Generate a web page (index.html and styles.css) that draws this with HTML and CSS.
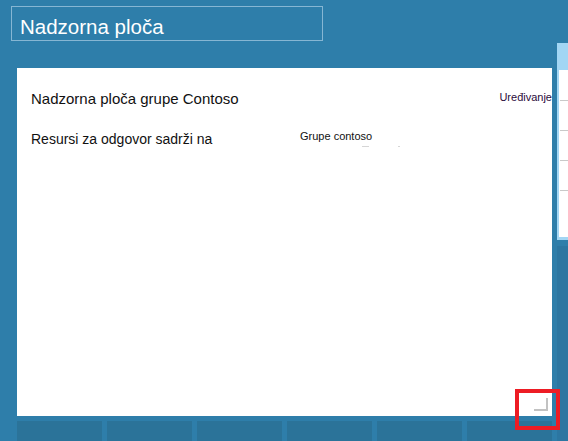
FILE: index.html
```html
<!DOCTYPE html>
<html lang="hr">
<head>
<meta charset="utf-8">
<title>Nadzorna ploča</title>
<link rel="stylesheet" href="styles.css">
</head>
<body>
<div class="page">
  <div class="left-col">
    <div class="page-title">Nadzorna ploča</div>
    <div class="panel">
      <div class="row row-head">
        <div class="big-text">Nadzorna ploča grupe Contoso</div>
        <div class="edit-link">Uređivanje</div>
      </div>
      <div class="row row-res">
        <div class="big-text res-label">Resursi za odgovor sadrži na</div>
        <div class="small-text">Grupe contoso</div>
      </div>
      <span class="speck speck-a"></span>
      <span class="speck speck-b"></span>
      <span class="resize-handle"></span>
    </div>
    <div class="tiles">
      <div class="tile"></div>
      <div class="tile"></div>
      <div class="tile"></div>
      <div class="tile"></div>
      <div class="tile"></div>
      <div class="tile"></div>
    </div>
  </div>
  <div class="right-col">
    <div class="side-panel">
      <div class="side-head"></div>
      <div class="side-body">
        <div class="side-line"></div>
        <div class="side-line"></div>
        <div class="side-line"></div>
        <div class="side-line"></div>
      </div>
    </div>
    <div class="side-tile"></div>
  </div>
  <div class="highlight"></div>
</div>
</body>
</html>
```

FILE: styles.css
```css
html, body {
  margin: 0;
  padding: 0;
}
body {
  background: #2e7eaa;
  font-family: "Liberation Sans", Arial, sans-serif;
  overflow: hidden;
}
.page {
  position: relative;
  width: 568px;
  height: 441px;
  display: flex;
  overflow: hidden;
}
.left-col {
  width: 557px;
  flex: none;
  display: flex;
  flex-direction: column;
}
.page-title {
  margin: 6px 0 0 11px;
  width: 302px;
  height: 25px;
  padding: 8px 0 0 8px;
  border: 1px solid #86b6d3;
  color: #ffffff;
  font-size: 20.5px;
  line-height: 23px;
  white-space: nowrap;
  overflow: hidden;
}
.panel {
  position: relative;
  margin: 27px 0 0 17px;
  width: 535px;
  height: 355px;
  background: #ffffff;
  overflow: hidden;
}
.row {
  display: flex;
  align-items: flex-start;
}
.row-head {
  margin-top: 22px;
  padding-left: 14px;
  justify-content: space-between;
}
.row-res {
  margin-top: 22px;
  padding-left: 14px;
}
.big-text {
  font-size: 15px;
  line-height: 18px;
  color: #111111;
  white-space: nowrap;
}
.res-label {
  width: 269px;
  flex: none;
  font-size: 14px;
}
.edit-link {
  margin-top: 1px;
  font-size: 11px;
  line-height: 13px;
  color: #2b0b3c;
  white-space: nowrap;
}
.small-text {
  font-size: 11px;
  line-height: 13px;
  color: #111111;
  white-space: nowrap;
}
.speck {
  position: absolute;
  height: 1px;
  background: #d6d6d6;
}
.speck-a {
  left: 345px;
  top: 78px;
  width: 7px;
}
.speck-b {
  left: 381px;
  top: 78px;
  width: 2px;
}
.resize-handle {
  position: absolute;
  right: 4px;
  bottom: 5px;
  width: 12px;
  height: 11px;
  border-right: 2px solid #c2c2c2;
  border-bottom: 2px solid #c2c2c2;
}
.tiles {
  margin: 5px 0 0 17px;
  display: flex;
  gap: 5px;
}
.tile {
  width: 85px;
  height: 20px;
  flex: none;
  background: #2b7399;
}
.right-col {
  flex: 1;
  display: flex;
  flex-direction: column;
  padding-top: 43px;
}
.side-panel {
  height: 197px;
  background: #a2d6f4;
  display: flex;
  flex-direction: column;
}
.side-head {
  height: 27px;
  flex: none;
}
.side-body {
  flex: 1;
  margin: 0 0 3px 2px;
  background: #ffffff;
  display: flex;
  flex-direction: column;
  padding-top: 30px;
  gap: 29px;
}
.side-line {
  height: 1px;
  margin-left: 1px;
  background: #c9c9c9;
}
.side-tile {
  margin-top: 6px;
  flex: 1;
  background: #2c76a1;
}
.highlight {
  position: absolute;
  left: 515px;
  top: 389px;
  width: 37px;
  height: 33px;
  border: 4px solid #ed1c24;
}
```
